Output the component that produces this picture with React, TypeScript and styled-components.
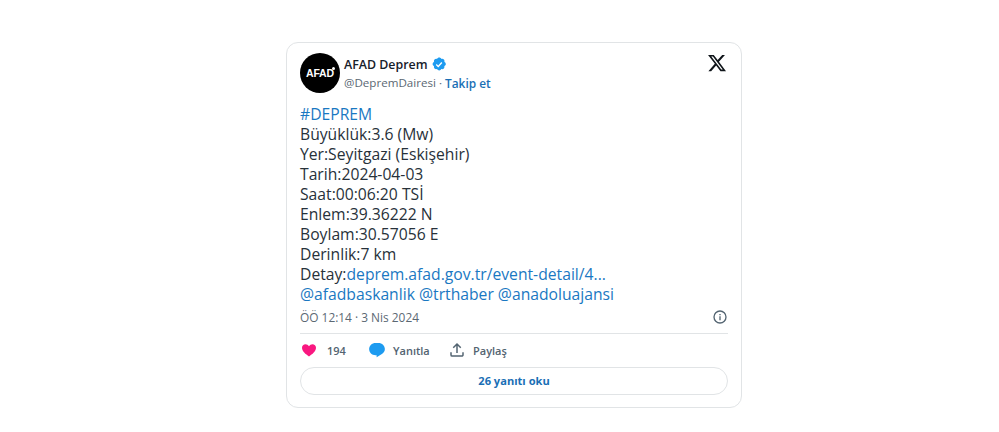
import React from "react";
import styled, { createGlobalStyle } from "styled-components";

const Global = createGlobalStyle`
  html, body {
    margin: 0;
    padding: 0;
    background: #ffffff;
    font-family: "Open Sans", "Noto Sans", sans-serif;
  }
`;

const Page = styled.div`
  width: 999px;
  height: 432px;
  padding: 42px 0 0 286px;
  box-sizing: border-box;
  overflow: hidden;
`;

const Card = styled.article`
  width: 456px;
  height: 366px;
  box-sizing: border-box;
  padding: 10px 13px 0;
  border: 1px solid #e1e4e6;
  border-radius: 12px;
  display: flex;
  flex-direction: column;
`;

const Header = styled.header`
  display: flex;
  align-items: flex-start;
  gap: 4px;
  height: 40px;
`;

const Avatar = styled.div`
  position: relative;
  width: 40px;
  height: 40px;
  border-radius: 50%;
  background: #000000;
  color: #ffffff;
  display: flex;
  align-items: center;
  justify-content: center;
  font-family: "Liberation Sans", sans-serif;
  font-size: 10.5px;
  font-weight: 700;
  letter-spacing: -0.2px;
  flex: none;
`;

const AvatarMark = styled.span`
  position: absolute;
  top: 14px;
  right: 5px;
  width: 3px;
  height: 3px;
  border-radius: 50%;
  background: #ffffff;
`;

const Author = styled.div`
  flex: 1;
  display: flex;
  flex-direction: column;
  padding-top: 1px;
`;

const NameRow = styled.div`
  display: flex;
  align-items: center;
  gap: 3px;
  height: 20px;
  font-size: 12.4px;
  font-weight: 600;
  color: #17202a;
`;

const HandleRow = styled.div`
  display: flex;
  align-items: center;
  height: 17px;
  font-size: 11.6px;
  color: #5b6873;
  white-space: pre;
`;

const Follow = styled.span`
  color: #1a6fb5;
  font-weight: 600;
  font-size: 11.9px;
`;

const XLogo = styled.svg`
  width: 20px;
  height: 20px;
  margin-right: 1px;
  fill: #0f1419;
`;

const Body = styled.div`
  margin-top: 11px;
  font-size: 15.7px;
  line-height: 20px;
  color: #27313a;
`;

const Line = styled.div`
  white-space: pre;
`;

const Link = styled.span`
  color: #1a78c2;
`;

const MetaRow = styled.div`
  display: flex;
  align-items: center;
  justify-content: space-between;
  height: 20px;
  margin-top: 3px;
  font-size: 11.9px;
  color: #5b6873;
`;

const Divider = styled.hr`
  margin: 6px 0 0;
  border: none;
  border-top: 1px solid #e1e4e6;
`;

const Actions = styled.div`
  display: flex;
  align-items: center;
  height: 32px;
  padding-left: 1px;
`;

const Action = styled.div<{ $gap: number; $width: number }>`
  display: flex;
  align-items: center;
  gap: ${(p) => p.$gap}px;
  width: ${(p) => p.$width}px;
  font-size: 11px;
  font-weight: 600;
  color: #536471;
`;

const ReadMore = styled.div`
  height: 24px;
  margin-top: 1px;
  padding-bottom: 2px;
  border: 1px solid #e1e4e6;
  border-radius: 14px;
  display: flex;
  align-items: center;
  justify-content: center;
  font-size: 11.1px;
  font-weight: 700;
  color: #1a6fb5;
`;

const lines = [
  "Büyüklük:3.6 (Mw)",
  "Yer:Seyitgazi (Eskişehir)",
  "Tarih:2024-04-03",
  "Saat:00:06:20 TSİ",
  "Enlem:39.36222 N",
  "Boylam:30.57056 E",
  "Derinlik:7 km",
];

export default function App() {
  return (
    <>
      <Global />
      <Page>
        <Card>
          <Header>
            <Avatar>
              AFAD
              <AvatarMark />
            </Avatar>
            <Author>
              <NameRow>
                AFAD Deprem
                <svg width="16" height="16" viewBox="0 0 22 22">
                  <path
                    fill="#1d9bf0"
                    d="M20.4 11c0-1.3-.8-2.4-2-2.9.4-1.2.2-2.5-.7-3.4-.9-.9-2.2-1.1-3.4-.7C13.800 2.800 12.600 2 11.300 2S8.800 2.800 8.300 4c-1.200-.4-2.500-.2-3.400.7-.9.900-1.100 2.200-.7 3.400-1.200.5-2 1.600-2 2.900s.8 2.400 2 2.900c-.4 1.200-.2 2.500.7 3.400.9.900 2.200 1.100 3.400.7.500 1.200 1.700 2 3 2s2.400-.8 2.900-2c1.200.4 2.500.2 3.400-.7.900-.9 1.100-2.200.7-3.400 1.200-.5 2.100-1.600 2.100-2.900z"
                  />
                  <path fill="#ffffff" d="M10 15.700 6.600 12.300l1.300-1.300 2 2 4.300-4.600 1.400 1.300z" />
                </svg>
              </NameRow>
              <HandleRow>
                @DepremDairesi · <Follow>Takip et</Follow>
              </HandleRow>
            </Author>
            <XLogo viewBox="0 0 24 24">
              <path d="M18.244 2.250h3.308l-7.227 8.260 8.502 11.240H16.170l-5.214-6.817L4.990 21.750H1.680l7.730-8.835L1.254 2.250H8.080l4.713 6.231zm-1.161 17.520h1.833L7.084 4.126H5.117z" />
            </XLogo>
          </Header>
          <Body>
            <Line>
              <Link>#DEPREM</Link>
            </Line>
            {lines.map((l) => (
              <Line key={l}>{l}</Line>
            ))}
            <Line>
              Detay:<Link>deprem.afad.gov.tr/event-detail/4...</Link>
            </Line>
            <Line>
              <Link>@afadbaskanlik @trthaber @anadoluajansi</Link>
            </Line>
          </Body>
          <MetaRow>
            <span>ÖÖ 12:14 · 3 Nis 2024</span>
            <svg width="16" height="16" viewBox="0 0 24 24" fill="#536471">
              <path d="M12 2a10 10 0 1 0 0 20 10 10 0 0 0 0-20zm0 2a8 8 0 1 1 0 16 8 8 0 0 1 0-16zm-1 3.500h2v2h-2zm0 3.500h2v6h-2z" />
            </svg>
          </MetaRow>
          <Divider />
          <Actions>
            <Action $gap={10} $width={67}>
              <svg width="16" height="16" viewBox="0 0 24 24" fill="#f91880">
                <path d="M12 21.600C7 18 1.500 14 1.500 8.500 1.500 5.400 3.900 3.200 6.800 3.200c2.100 0 4 1.100 5.200 3 1.200-1.900 3.100-3 5.200-3 2.900 0 5.300 2.200 5.300 5.300 0 5.500-5.500 9.500-10.500 13.100z" />
              </svg>
              194
            </Action>
            <Action $gap={7} $width={80}>
              <svg width="18" height="18" viewBox="0 0 24 24" fill="#1d9bf0">
                <path d="M10 2.500h4c4.700 0 8.500 3.600 8.500 8.200 0 3.200-1.800 5.300-4.500 7L11.500 21.800V19H10c-4.700 0-8.500-3.700-8.500-8.300S5.300 2.500 10 2.500z" />
              </svg>
              Yanıtla
            </Action>
            <Action $gap={7} $width={80}>
              <svg width="18" height="18" viewBox="0 0 24 24" fill="#536471">
                <path d="M12 2.600l5.700 5.700-1.400 1.400L13 6.400V16h-2V6.400L7.700 9.700 6.300 8.300zM21 15l-.02 3.500c0 1.400-1.100 2.500-2.500 2.500h-13A2.500 2.500 0 0 1 3 18.500V15h2v3.500c0 .3.200.5.500.5h13c.3 0 .5-.2.500-.5l.02-3.500z" />
              </svg>
              Paylaş
            </Action>
          </Actions>
          <ReadMore>26 yanıtı oku</ReadMore>
        </Card>
      </Page>
    </>
  );
}
